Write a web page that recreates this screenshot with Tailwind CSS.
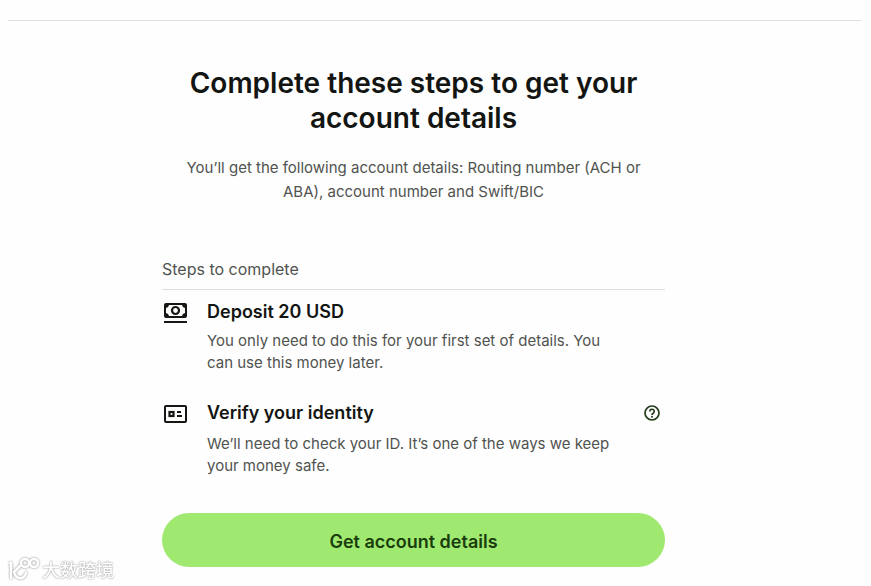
<!DOCTYPE html>
<html lang="en">
<head>
  <meta charset="utf-8">
  <meta name="viewport" content="width=device-width, initial-scale=1">
  <title>Get account details</title>
  <script src="https://cdn.jsdelivr.net/npm/@tailwindcss/browser@4"></script>
</head>
<body class="min-h-screen bg-[#fefefe] font-['Inter',sans-serif] text-base text-[#50534f]">
  <!-- Top divider -->
  <header class="h-[21px] ml-2 mr-[10px] border-b border-[#dfe0df]"></header>

  <main class="pr-11">
    <div class="max-w-[503px] mx-auto pt-[45px]">
      <!-- Intro -->
      <div class="text-center">
        <h1 class="px-4 text-[28px] leading-[35px] font-semibold text-[#131512]">Complete these steps to get your account details</h1>
        <p class="mt-5 px-4 text-[15px] leading-6">You’ll get the following account details: Routing number (ACH or ABA), account number and Swift/BIC</p>
      </div>

      <!-- Steps -->
      <section class="mt-[53px]">
        <h2 class="pb-2 leading-6 border-b border-[#dddfdc]">Steps to complete</h2>
        <ul>
          <li class="flex pt-[10px]">
            <svg class="w-6 h-6 mr-5 ml-px shrink-0 text-[#151713]" viewBox="0 0 24 24" fill="none" stroke="currentColor">
              <rect x="2" y="4" width="21" height="13" rx="1" stroke-width="2"/>
              <path d="M2 4h4a4 4 0 0 1-4 4zM23 4h-4a4 4 0 0 0 4 4zM2 17h4a4 4 0 0 0-4-4zM23 17h-4a4 4 0 0 1 4-4z" fill="currentColor" stroke="none"/>
              <circle cx="12.500" cy="10.500" r="3.500" stroke-width="2.200"/>
              <path d="M1 22h23" stroke-width="2"/>
            </svg>
            <div class="flex-1">
              <h3 class="text-lg leading-6 font-semibold text-[#131512]">Deposit 20 USD</h3>
              <p class="mt-[6px] pr-10 text-[15px] leading-[22px]">You only need to do this for your first set of details. You can use this money later.</p>
            </div>
          </li>
          <li class="flex pt-[27px]">
            <svg class="w-6 h-6 mr-5 ml-px shrink-0 text-[#151713]" viewBox="0 0 24 24" fill="none" stroke="currentColor">
              <rect x="2" y="5" width="21" height="16" rx="1" stroke-width="2"/>
              <rect x="6.500" y="11" width="4" height="4" stroke-width="2.200"/>
              <path d="M14 11h4M14 15h5" stroke-width="2"/>
            </svg>
            <div class="flex-1">
              <div class="flex items-center justify-between">
                <h3 class="text-lg leading-6 font-semibold text-[#131512]">Verify your identity</h3>
                <button type="button" aria-label="Help with identity verification" class="mr-[5px] text-[#253d1b]">
                  <svg class="w-4 h-4" viewBox="0 0 16 16" fill="none" stroke="currentColor">
                    <circle cx="8" cy="8" r="7" stroke-width="1.700"/>
                    <path d="M5.800 6.500a2.200 2.200 0 1 1 3.400 1.800C8.400 8.700 8 9 8 9.900" stroke-width="1.700"/>
                    <circle cx="8" cy="11.800" r="1" fill="currentColor" stroke="none"/>
                  </svg>
                </button>
              </div>
              <p class="mt-2 pr-10 text-[15px] leading-[22px]">We’ll need to check your ID. It’s one of the ways we keep your money safe.</p>
            </div>
          </li>
        </ul>
      </section>

      <button type="button" class="w-full h-[54px] mt-9 pt-[3px] rounded-full bg-[#a0e971] text-lg font-semibold text-[#193d0c]">Get account details</button>
    </div>
  </main>

  <!-- Watermark -->
  <div class="fixed left-2 bottom-[5px] flex items-center gap-[3px] text-white">
    <svg class="w-[31px] h-6 drop-shadow-[0_0_1px_#888]" viewBox="0 0 31 24" fill="none" stroke="currentColor" stroke-width="2.500" stroke-linecap="round" stroke-linejoin="round">
      <path d="M2 6h1v15M12 9l-6 6c2 8 10 8 12 1"/>
      <circle cx="17" cy="6" r="4"/>
      <circle cx="26" cy="6" r="4"/>
    </svg>
    <span class="font-['Noto_Sans_CJK_SC',sans-serif] text-lg leading-6 font-medium [text-shadow:0_0_2px_#999,0_0_1px_#aaa]">大数跨境</span>
  </div>
</body>
</html>
